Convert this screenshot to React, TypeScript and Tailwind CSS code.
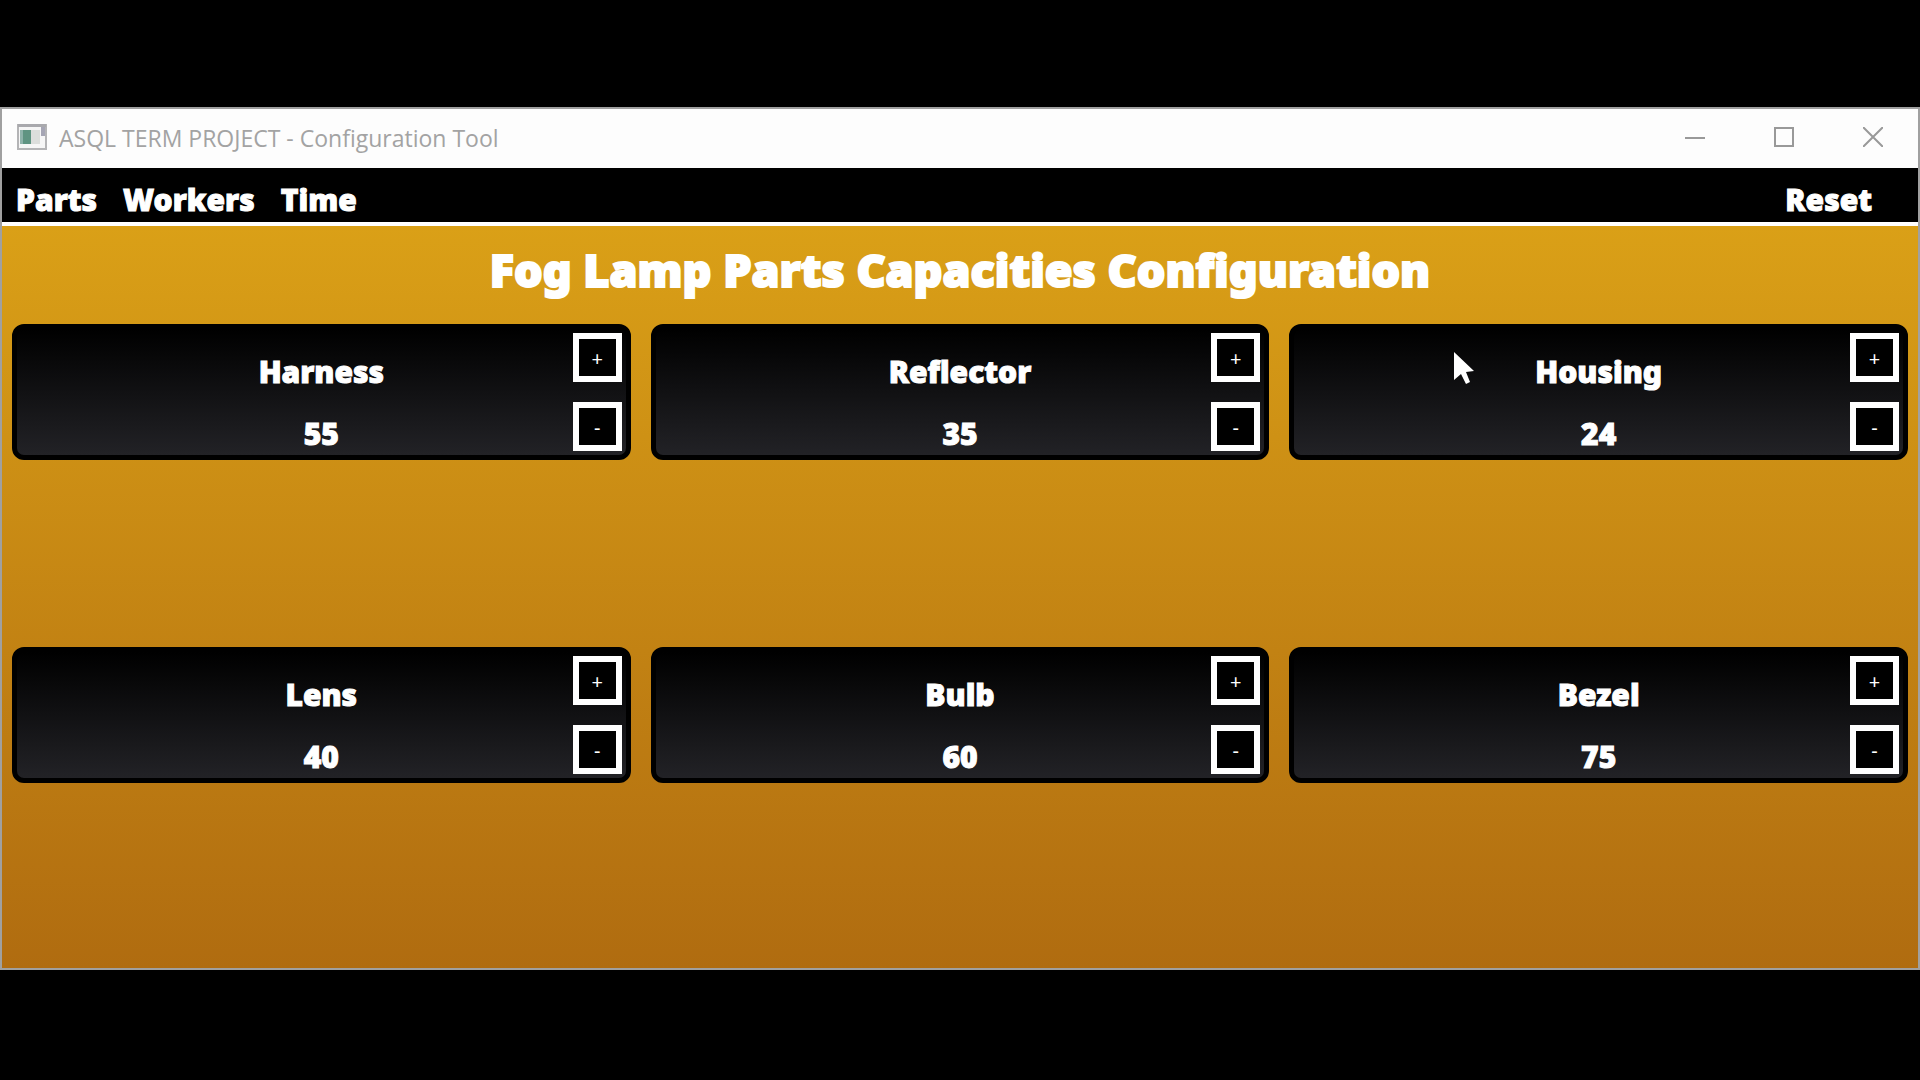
import { useState } from 'react';

const INITIAL = [
  { name: 'Harness', value: 55 },
  { name: 'Reflector', value: 35 },
  { name: 'Housing', value: 24 },
  { name: 'Lens', value: 40 },
  { name: 'Bulb', value: 60 },
  { name: 'Bezel', value: 75 },
];

function AppIcon() {
  return (
    <svg viewBox="0 0 30 26" className="mb-1 h-[26px] w-[30px]" aria-hidden="true">
      <rect x="1" y="1" width="28" height="24" fill="#f6f6f6" stroke="#b4b4b6" strokeWidth="2" />
      <rect x="1" y="0" width="28" height="3" fill="#a9a9ad" />
      <rect x="3" y="6" width="11" height="14" fill="#5f9482" />
      <rect x="3" y="6" width="3" height="14" fill="#8fb3ab" />
      <rect x="14" y="6" width="9" height="14" fill="#dcdedc" />
      <rect x="24" y="3" width="4" height="9" fill="#a5a5b4" />
    </svg>
  );
}

function Pointer() {
  return (
    <svg viewBox="0 0 20 33" className="absolute left-[160px] top-[23px] h-[33px] w-5" aria-hidden="true">
      <path d="M0 0V28L7 22L12 32L16 30L12 20L20 19Z" fill="#fff" />
    </svg>
  );
}

type StepProps = { label: string; sign: string; onClick: () => void };

function StepButton({ label, sign, onClick }: StepProps) {
  return (
    <button
      type="button"
      aria-label={label}
      onClick={onClick}
      className="flex size-[49px] items-center justify-center border-6 border-white bg-black pt-0.5 text-xl leading-none text-white"
    >
      {sign}
    </button>
  );
}

type CardProps = { name: string; value: number; onStep: (d: number) => void; pointer: boolean };

function PartCard({ name, value, onStep, pointer }: CardProps) {
  return (
    <section className="relative m-2.5 grid grid-cols-[1fr_auto] rounded-xl border-5 border-black bg-linear-to-b/srgb from-black to-[#222226]">
      <div className="col-span-2 col-start-1 row-start-1 flex flex-col items-center gap-[26px] pt-[25px] text-[30px] leading-9 font-black [-webkit-text-stroke:1px_white]">
        <h2>{name}</h2>
        <output>{value}</output>
      </div>
      <div className="z-10 col-start-2 row-start-1 flex flex-col gap-5 p-1">
        <StepButton label={'Increase ' + name} sign="+" onClick={() => onStep(1)} />
        <StepButton label={'Decrease ' + name} sign="-" onClick={() => onStep(-1)} />
      </div>
      {pointer && <Pointer />}
    </section>
  );
}

export default function App() {
  const [parts, setParts] = useState(INITIAL);
  const step = (index: number, d: number) =>
    setParts(parts.map((p, i) => (i === index ? { ...p, value: p.value + d } : p)));

  return (
    <div className="flex min-h-screen flex-col bg-black pt-[107px] pb-[110px] font-['Noto_Sans','Open_Sans',sans-serif] text-white">
      <div className="flex flex-1 flex-col border-2 border-[#a0a0a0]">
        <header className="flex h-[59px] items-center bg-[#fdfdfd] pl-[15px] text-[#a3a3a3]">
          <AppIcon />
          <h1 className="ml-3 flex-1 font-['Open_Sans',sans-serif] text-[23px]">ASQL TERM PROJECT - Configuration Tool</h1>
          <div className="flex h-full pr-px pb-1">
            <button type="button" aria-label="Minimize" className="flex w-[89px] items-center justify-center">
              <svg viewBox="0 0 20 20" className="size-5" fill="none" stroke="#999" strokeWidth="2"><path d="M0 11H20" /></svg>
            </button>
            <button type="button" aria-label="Maximize" className="flex w-[89px] items-center justify-center">
              <svg viewBox="0 0 20 20" className="size-5" fill="none" stroke="#999" strokeWidth="2"><path d="M1 1H19V19H1Z" /></svg>
            </button>
            <button type="button" aria-label="Close" className="flex w-[89px] items-center justify-center">
              <svg viewBox="0 0 20 20" className="size-5" fill="none" stroke="#999" strokeWidth="2"><path d="M0 0L20 20M20 0L0 20" /></svg>
            </button>
          </div>
        </header>
        <nav className="flex h-[58px] items-center gap-[26px] border-b-4 border-white bg-black pt-2 pr-[46px] pl-3.5 text-[30px] font-black [-webkit-text-stroke:1px_white]">
          <button type="button">Parts</button>
          <button type="button">Workers</button>
          <button type="button">Time</button>
          <button type="button" className="ml-auto" onClick={() => setParts(INITIAL)}>Reset</button>
        </nav>
        <main className="flex flex-1 flex-col bg-linear-to-b from-[#daa017] to-[#b06c10]">
          <h2 className="h-[88px] pt-2 text-center text-[45px] leading-[72px] font-black [-webkit-text-stroke:2px_white]">
            Fog Lamp Parts Capacities Configuration
          </h2>
          <div className="grid flex-1 grid-cols-3 grid-rows-2 items-start pb-2">
            {parts.map((p, i) => (
              <PartCard key={p.name} name={p.name} value={p.value} onStep={(d) => step(i, d)} pointer={i === 2} />
            ))}
          </div>
        </main>
      </div>
    </div>
  );
}
